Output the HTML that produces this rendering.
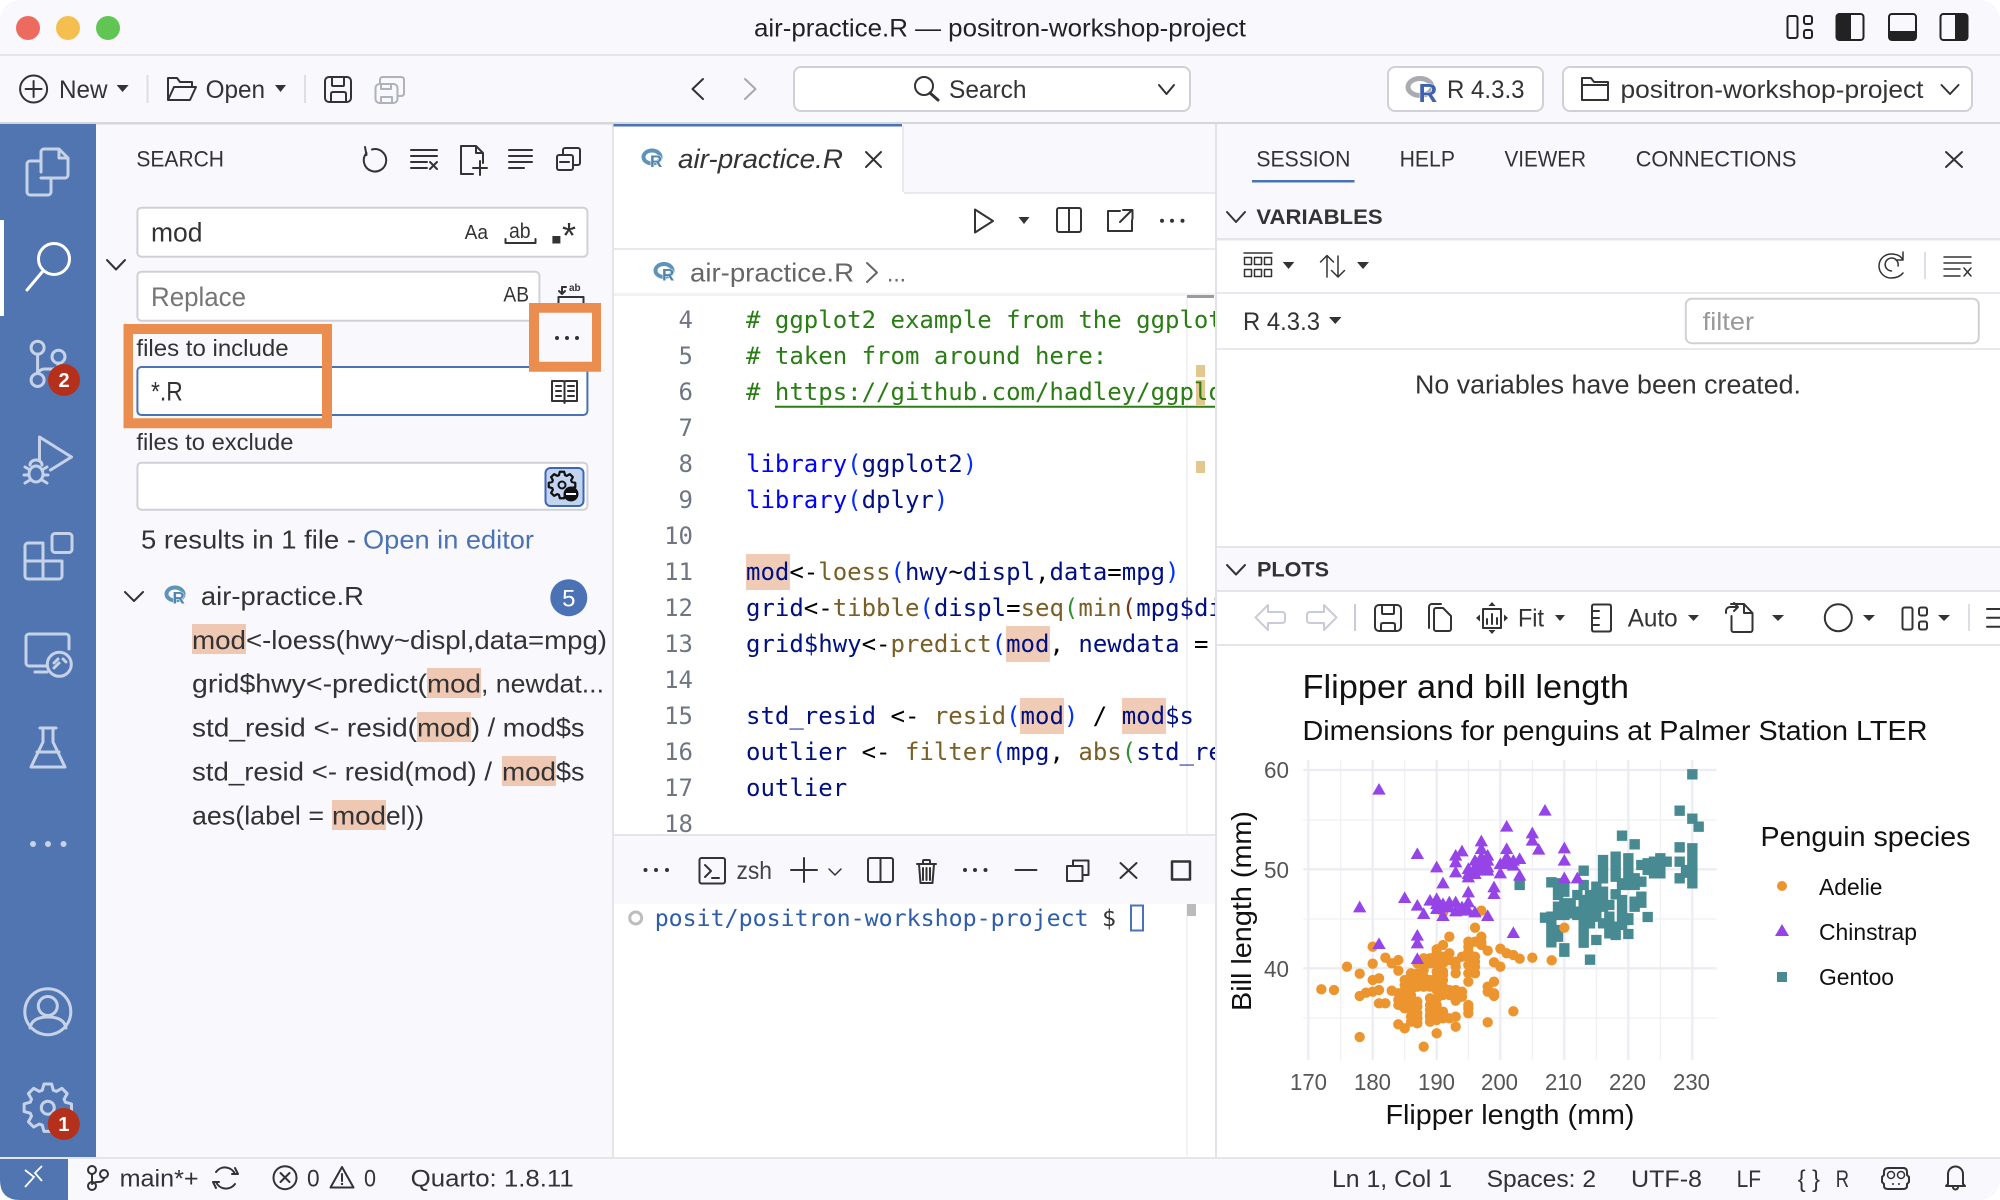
<!DOCTYPE html>
<html lang="en">
<head>
<meta charset="utf-8">
<title>air-practice.R — positron-workshop-project</title>
<style>
html,body{margin:0;padding:0;background:#fff;width:2000px;height:1200px;overflow:hidden}
svg{display:block;font-family:"Liberation Sans",sans-serif}
text{white-space:pre;fill:#333;stroke:none}
.m text,text.m{font-family:"DejaVu Sans Mono","Liberation Mono",monospace}
.k{fill:#0000ff}.v{fill:#001080}.f{fill:#795e26}.o{fill:#000}.b1{fill:#0431fa}.b2{fill:#319331}.b3{fill:#7b3814}
.ln{fill:#6f7682;text-anchor:end}
.i{fill:none;stroke:#333;stroke-width:2;stroke-linecap:round;stroke-linejoin:round}
.a{fill:none;stroke:#c6d2e8;stroke-width:3;stroke-linecap:round;stroke-linejoin:round}
.g{fill:none;stroke:#c9cbd8;stroke-width:2;stroke-linejoin:round}
</style>
</head>
<body>
<svg width="2000" height="1200" viewBox="0 0 2000 1200" xmlns="http://www.w3.org/2000/svg">
<rect width="2000" height="1200" rx="20" fill="#f8f8fd"/>

<!-- traffic lights -->
<circle cx="28" cy="28" r="12" fill="#ec6a5e"/><circle cx="68" cy="28" r="12" fill="#f4bf4f"/><circle cx="108" cy="28" r="12" fill="#61c554"/>
<text x="754" y="36.500" font-size="25" textLength="492" lengthAdjust="spacingAndGlyphs" style="fill:#222">air-practice.R — positron-workshop-project</text>
<rect y="54" width="2000" height="2" fill="#e4e4ea"/>
<!-- layout icons -->
<g class="i" style="stroke:#222">
<rect x="1787.500" y="16" width="10" height="22" rx="2"/><rect x="1804" y="16" width="8" height="8" rx="2"/><rect x="1804" y="30" width="8" height="8" rx="2"/>
<rect x="1836.500" y="14" width="27" height="26" rx="3"/><rect x="1889" y="14" width="27" height="26" rx="3"/><rect x="1940.500" y="14" width="27" height="26" rx="3"/>
</g>
<path d="M1839 14h12v26h-12a3 3 0 0 1-3-3V17a3 3 0 0 1 3-3z" fill="#222"/>
<path d="M1889 31h27v6a3 3 0 0 1-3 3h-21a3 3 0 0 1-3-3z" fill="#222"/>
<path d="M1955 14h10a3 3 0 0 1 3 3v20a3 3 0 0 1-3 3h-10z" fill="#222"/>

<!-- toolbar -->
<g class="i">
<circle cx="33.600" cy="89" r="13.500"/><path d="M33.600 81v16M25.600 89h16"/>
<path d="M168 100V78h9l3 4h12v5M168 100l6-13h22l-6 13z"/>
<rect x="325" y="77" width="26" height="25" rx="4"/><path d="M332 77v8q0 1 1 1h10q1 0 1-1v-8M331 102v-8q0-2 2-2h11q2 0 2 2v8"/>
</g>
<text x="59" y="98" font-size="25" textLength="48.500" lengthAdjust="spacingAndGlyphs">New</text>
<path d="M116.600 85h12l-6 7zM275 85h11l-5.500 7z" fill="#333"/>
<text x="205.600" y="98" font-size="25" textLength="59.500" lengthAdjust="spacingAndGlyphs">Open</text>
<path d="M147.500 75v28M305 75v28" stroke="#dedee6" stroke-width="2"/>
<g class="i" style="stroke:#b0b2ba">
<rect x="375.500" y="84" width="22" height="19" rx="4"/><path d="M381 84v5h10v-5M381 103v-6h11v6M383 77h18q3 0 3 3v13q0 3-3 3h-3M383 77q-3 0-3 3v4"/>
</g>
<g class="i"><path d="M703 79l-10.500 10L703 99"/></g>
<path d="M745 79l10.500 10L745 99" fill="none" stroke="#a8a8b0" stroke-width="2" stroke-linecap="round" stroke-linejoin="round"/>
<rect x="794" y="67" width="396" height="44" rx="7" fill="#fff" stroke="#d0d0d8" stroke-width="2"/>
<g class="i"><circle cx="924" cy="86" r="9"/><path d="M930 93l8 7" stroke-width="3"/></g>
<text x="949" y="98" font-size="25" textLength="77.500" lengthAdjust="spacingAndGlyphs">Search</text>
<path class="i" d="M1159 85l7.500 9 7.500-9"/>

<rect x="1388" y="67" width="155" height="44" rx="7" fill="#fff" stroke="#d0d0d8" stroke-width="2"/>
<ellipse cx="1420" cy="87" rx="12" ry="8.500" fill="none" stroke="#a9abb0" stroke-width="5"/>
<text x="1418.500" y="102" font-size="26" font-weight="700" style="fill:#3f62ae;stroke:#fff;stroke-width:1;paint-order:stroke">R</text>
<text x="1447" y="98" font-size="25" textLength="77.500" lengthAdjust="spacingAndGlyphs">R 4.3.3</text>
<rect x="1563" y="67" width="409" height="44" rx="7" fill="#fff" stroke="#d0d0d8" stroke-width="2"/>
<g class="i"><path d="M1582 78h9l3 4h14v18h-26zM1582 85h26"/></g>
<text x="1620.500" y="98" font-size="25" textLength="303" lengthAdjust="spacingAndGlyphs">positron-workshop-project</text>
<path class="i" d="M1941.500 85l8.500 9 8.500-9"/>
<rect y="122" width="2000" height="2.500" fill="#d6d6dd"/>

<!-- activity bar -->
<rect y="124" width="96" height="1033" fill="#5075b1"/>
<rect y="220" width="4" height="96" fill="#fff"/>
<g class="a">
<path d="M41 172V152a3 3 0 0 1 3-3h15l9 9v17a3 3 0 0 1-3 3H41M59 149v9h9M41 161H30a3 3 0 0 0-3 3v28a3 3 0 0 0 3 3h18a3 3 0 0 0 3-3V178"/>
<path d="M39.500 460V437l32 20-21 13"/>
<ellipse cx="36" cy="474" rx="7" ry="8"/><path d="M30 465a6 5 0 0 1 12 0M25 467l5 3M47 467l-5 3M24 475h5M48 475h-5M25 483l5-3M47 483l-5-3"/>
<rect x="52" y="533.500" width="20" height="19" rx="3"/><path d="M25 546a3 3 0 0 1 3-3h15v36H28a3 3 0 0 1-3-3zM25 561h37M43 561h19v15a3 3 0 0 1-3 3H43"/>
<path d="M47 666H29a3 3 0 0 1-3-3V637a3 3 0 0 1 3-3h37a3 3 0 0 1 3 3v12M35 672h12"/><circle cx="59.300" cy="664.300" r="12"/><path d="M54 668l5-5M63 659l3 3M58 659l-4 4"/>
<path d="M40 728h16M43 728v14L31 767h34L53 742v-14M37 752h22"/>
<circle cx="47.800" cy="1011.700" r="23"/><circle cx="47.800" cy="1006" r="9.500"/><path d="M30 1028q2-11 18-11t18 11"/>
<polygon transform="translate(47.800 1107.700)" points="-3.800,-23.700 3.800,-23.700 5.500,-17.500 8.500,-16.300 14.100,-19.400 19.400,-14.100 16.300,-8.500 17.500,-5.500 23.700,-3.800 23.700,3.800 17.500,5.500 16.300,8.500 19.400,14.100 14.100,19.400 8.500,16.300 5.500,17.500 3.800,23.700 -3.800,23.700 -5.500,17.500 -8.500,16.300 -14.100,19.400 -19.400,14.100 -16.300,8.500 -17.500,5.500 -23.700,3.800 -23.700,-3.800 -17.500,-5.500 -16.300,-8.500 -19.400,-14.100 -14.100,-19.400 -8.500,-16.300 -5.500,-17.500"/>
<circle cx="47.800" cy="1107.700" r="6.500"/>
<circle cx="37.600" cy="347.700" r="6.500"/><circle cx="58.500" cy="356.700" r="6.500"/><circle cx="37.600" cy="380" r="6.500"/><path d="M37.600 354v19M58.500 363q0 6-6 6h-8q-4 0-6.900 4"/>
</g>
<g fill="none" stroke="#fff" stroke-width="3" stroke-linecap="round"><circle cx="54" cy="259" r="15.500"/><path d="M43 271l-16 19"/></g>
<circle cx="33" cy="844" r="3" fill="#c6d2e8"/><circle cx="48" cy="844" r="3" fill="#c6d2e8"/><circle cx="63.500" cy="844" r="3" fill="#c6d2e8"/>
<circle cx="64" cy="380" r="16" fill="#b5301a"/><text x="64" y="387" font-size="20" font-weight="700" text-anchor="middle" style="fill:#fff">2</text>
<circle cx="63.800" cy="1124" r="16" fill="#b5301a"/><text x="63.800" y="1131" font-size="20" font-weight="700" text-anchor="middle" style="fill:#fff">1</text>

<!-- sidebar -->
<rect x="612" y="124" width="2" height="1033" fill="#e4e4ea"/>
<text x="136.400" y="166.700" font-size="22" textLength="87.600" lengthAdjust="spacingAndGlyphs">SEARCH</text>
<g class="i">
<path d="M372 149.500A11.200 11.200 0 1 1 366.500 153M365 147l1.500 8"/>
<path d="M411 150h26M411 156h26M411 162h16M411 168h16M430 162l7 7M437 162l-7 7"/>
<path d="M473 174h-12V146h15l7 7v10M476 146v7h7M480 161v14M473 168h14"/>
<path d="M509 150h23M509 156h23M509 162h23M509 168h15"/>
<path d="M563 155v-5a2 2 0 0 1 2-2h13a2 2 0 0 1 2 2v13a2 2 0 0 1-2 2h-5"/><rect x="557" y="155" width="16" height="15" rx="2"/><path d="M560 162h9"/>
</g>
<rect x="137.400" y="207.700" width="450" height="49" rx="4" fill="#fff" stroke="#d0d0d8" stroke-width="2"/>
<text x="151" y="241.700" font-size="27" textLength="51.500" lengthAdjust="spacingAndGlyphs">mod</text>
<text x="464.600" y="239" font-size="20" textLength="23.400" lengthAdjust="spacingAndGlyphs">Aa</text>
<text x="509" y="238" font-size="21" textLength="21.600" lengthAdjust="spacingAndGlyphs">ab</text>
<path class="i" d="M505.500 239v4h30v-4"/>
<rect x="552.400" y="236" width="8" height="7.500" fill="#333"/>
<text x="562" y="248" font-size="36">*</text>
<path class="i" d="M107 260l9 9.500 9-9.500"/>
<rect x="137.400" y="271.700" width="402" height="49" rx="4" fill="#fff" stroke="#d0d0d8" stroke-width="2"/>
<text x="151" y="306" font-size="27" textLength="95" lengthAdjust="spacingAndGlyphs" style="fill:#757575">Replace</text>
<text x="503.400" y="301.600" font-size="21" textLength="25.600" lengthAdjust="spacingAndGlyphs">AB</text>
<g class="i"><path d="M558.500 303v-6h25v6M566 287h-4v6M559 291l3 3 3-3"/></g>
<text x="569" y="291" font-size="10" font-weight="700">ab</text>
<text x="136.400" y="356" font-size="23" textLength="152.200" lengthAdjust="spacingAndGlyphs">files to include</text>
<rect x="137.400" y="367" width="450" height="48" rx="4" fill="#fff" stroke="#4a72b5" stroke-width="2"/>
<text x="151" y="400.700" font-size="27" textLength="31.700" lengthAdjust="spacingAndGlyphs">*.R</text>
<g class="i"><path d="M552 381h11q1.500 0 1.500 2 0-2 1.500-2h11v20h-11q-1.500 0-1.500 2 0-2-1.500-2h-11zM564.500 383v18M556 386h5M556 391h5M556 396h5M568 386h6M568 391h6M568 396h6"/></g>
<text x="136.400" y="450" font-size="23" textLength="157" lengthAdjust="spacingAndGlyphs">files to exclude</text>
<rect x="137.400" y="462.700" width="450" height="47" rx="4" fill="#fff" stroke="#d0d0d8" stroke-width="2"/>
<rect x="545.500" y="468" width="38" height="38" rx="5" fill="#c2d4f0" stroke="#3d66b8" stroke-width="2"/>
<polygon class="i" style="stroke:#111;stroke-width:4" transform="translate(562 485) scale(.56)" points="-3.800,-23.700 3.800,-23.700 5.500,-17.500 8.500,-16.300 14.100,-19.400 19.400,-14.100 16.300,-8.500 17.500,-5.500 23.700,-3.800 23.700,3.800 17.500,5.500 16.300,8.500 19.400,14.100 14.100,19.400 8.500,16.300 5.500,17.500 3.800,23.700 -3.800,23.700 -5.500,17.500 -8.500,16.300 -14.100,19.400 -19.400,14.100 -16.300,8.500 -17.500,5.500 -23.700,3.800 -23.700,-3.800 -17.500,-5.500 -16.300,-8.500 -19.400,-14.100 -14.100,-19.400 -8.500,-16.300 -5.500,-17.500"/>
<circle cx="562" cy="485" r="3.500" fill="none" stroke="#111" stroke-width="2"/>
<circle cx="571" cy="494" r="7.500" fill="#111"/><path d="M566 494h10" stroke="#fff" stroke-width="2"/>
<text x="141" y="548.300" font-size="26" textLength="215" lengthAdjust="spacingAndGlyphs">5 results in 1 file -</text>
<text x="363" y="548.300" font-size="26" textLength="171" lengthAdjust="spacingAndGlyphs" style="fill:#4a72b5">Open in editor</text>
<path class="i" d="M125 592l9 9 9-9"/>
<ellipse cx="175" cy="594" rx="8.500" ry="6.500" fill="none" stroke="#5e93ba" stroke-width="4"/>
<text x="172.500" y="603.500" font-size="17" font-weight="700" style="fill:#4f86ae;stroke:#f8f8fd;stroke-width:1;paint-order:stroke">R</text>
<text x="200.900" y="605" font-size="26" textLength="163" lengthAdjust="spacingAndGlyphs">air-practice.R</text>
<circle cx="568.800" cy="597.700" r="18.500" fill="#4a72b5"/><text x="568.800" y="606.500" font-size="24" text-anchor="middle" style="fill:#fff">5</text>
<g fill="#eec8b3">
<rect x="192" y="624" width="54" height="30"/><rect x="427" y="668" width="54" height="30"/><rect x="417" y="712" width="54" height="30"/><rect x="502" y="756" width="54" height="30"/><rect x="332" y="800" width="54" height="30"/>
</g>
<g font-size="26">
<text x="192" y="649" textLength="54" lengthAdjust="spacingAndGlyphs">mod</text><text x="246" y="649" textLength="361" lengthAdjust="spacingAndGlyphs">&lt;-loess(hwy~displ,data=mpg)</text>
<text x="192" y="692.700" textLength="235" lengthAdjust="spacingAndGlyphs">grid$hwy&lt;-predict(</text><text x="427" y="692.700" textLength="54" lengthAdjust="spacingAndGlyphs">mod</text><text x="481" y="692.700" textLength="123" lengthAdjust="spacingAndGlyphs">, newdat...</text>
<text x="192" y="736.700" textLength="225" lengthAdjust="spacingAndGlyphs">std_resid &lt;- resid(</text><text x="417" y="736.700" textLength="54" lengthAdjust="spacingAndGlyphs">mod</text><text x="471" y="736.700" textLength="113.500" lengthAdjust="spacingAndGlyphs">) / mod$s</text>
<text x="192" y="780.700" textLength="300" lengthAdjust="spacingAndGlyphs">std_resid &lt;- resid(mod) /</text><text x="502" y="780.700" textLength="54" lengthAdjust="spacingAndGlyphs">mod</text><text x="556" y="780.700" textLength="28.500" lengthAdjust="spacingAndGlyphs">$s</text>
<text x="192" y="824.700" textLength="132" lengthAdjust="spacingAndGlyphs">aes(label =</text><text x="332" y="824.700" textLength="54" lengthAdjust="spacingAndGlyphs">mod</text><text x="386" y="824.700" textLength="38" lengthAdjust="spacingAndGlyphs">el))</text>
</g>

<!-- editor -->
<rect x="614" y="124" width="601" height="1033" fill="#fff"/>
<rect x="614" y="124" width="601" height="68" fill="#f8f8fd"/>
<rect x="614" y="126" width="288" height="68" fill="#fff"/>
<rect x="613.500" y="124" width="288.500" height="2.500" fill="#4a72b5"/>
<rect x="902" y="126" width="2" height="66" fill="#e8e8ee"/>
<rect x="904" y="192" width="311" height="2" fill="#e8e8ee"/>
<ellipse cx="652" cy="157" rx="8.500" ry="6.500" fill="none" stroke="#5e93ba" stroke-width="4"/>
<text x="650" y="167" font-size="17" font-weight="700" style="fill:#4f86ae;stroke:#fff;stroke-width:1;paint-order:stroke">R</text>
<text x="678" y="168" font-size="27" font-style="italic" textLength="165" lengthAdjust="spacingAndGlyphs">air-practice.R</text>
<path class="i" d="M866 152l15 15M881 152l-15 15"/>
<g class="i">
<path d="M975 209.500v23l18-11.500z"/>
<rect x="1057" y="208" width="24" height="24" rx="2"/><path d="M1069 208v24"/>
<path d="M1120 211h-12v20h24v-11M1120 222l12-12M1123 210h9.500v9"/>
</g>
<path d="M1018.500 217h11l-5.500 7z" fill="#333"/>
<circle cx="1162" cy="220.700" r="2" fill="#333"/><circle cx="1172" cy="220.700" r="2" fill="#333"/><circle cx="1182.500" cy="220.700" r="2" fill="#333"/>
<rect x="614" y="248" width="601" height="2" fill="#e8e8ee"/>
<ellipse cx="664" cy="270.500" rx="8.500" ry="6.500" fill="none" stroke="#5e93ba" stroke-width="4"/>
<text x="662" y="280.500" font-size="17" font-weight="700" style="fill:#4f86ae;stroke:#fff;stroke-width:1;paint-order:stroke">R</text>
<text x="690" y="281.700" font-size="26" textLength="164" lengthAdjust="spacingAndGlyphs" style="fill:#666">air-practice.R</text>
<path class="i" d="M867 263l10 9.500-10 9.500" style="stroke:#666"/>
<text x="887" y="281.700" font-size="24" textLength="19" lengthAdjust="spacingAndGlyphs" style="fill:#666">...</text>
<rect x="614" y="293" width="601" height="3" fill="#f2f2f5"/>
<path d="M1187 296v860" stroke="#eeeef2" stroke-width="1.500"/>
<rect x="1187" y="295" width="27" height="3" fill="#9a9a9f"/>
<g fill="#e3c78e"><rect x="1196" y="365" width="9" height="12"/><rect x="1196" y="380" width="9" height="25"/><rect x="1196" y="461" width="9" height="12"/></g>
<g fill="#f0ccb6"><rect x="746" y="554" width="44" height="36"/><rect x="1006" y="626" width="44" height="36"/><rect x="1020" y="698" width="44" height="36"/><rect x="1122" y="698" width="44" height="36"/></g>
<g class="m" font-size="24">
<text class="ln" x="693" y="328">4</text><text class="ln" x="693" y="364">5</text><text class="ln" x="693" y="400">6</text><text class="ln" x="693" y="436">7</text><text class="ln" x="693" y="472">8</text><text class="ln" x="693" y="508">9</text><text class="ln" x="693" y="544">10</text><text class="ln" x="693" y="580">11</text><text class="ln" x="693" y="616">12</text><text class="ln" x="693" y="652">13</text><text class="ln" x="693" y="688">14</text><text class="ln" x="693" y="724">15</text><text class="ln" x="693" y="760">16</text><text class="ln" x="693" y="796">17</text><text class="ln" x="693" y="832">18</text>
<text x="746" y="328" style="fill:#2a7d14"># ggplot2 example from the ggplot2 book</text>
<text x="746" y="364" style="fill:#2a7d14"># taken from around here:</text>
<text x="746" y="400" style="fill:#2a7d14"># https://github.com/hadley/ggplot2-book</text>
<text x="746" y="472"><tspan class="k">library</tspan><tspan class="b1">(</tspan><tspan class="v">ggplot2</tspan><tspan class="b1">)</tspan></text>
<text x="746" y="508"><tspan class="k">library</tspan><tspan class="b1">(</tspan><tspan class="v">dplyr</tspan><tspan class="b1">)</tspan></text>
<text x="746" y="580"><tspan class="v">mod</tspan><tspan class="o">&lt;-</tspan><tspan class="f">loess</tspan><tspan class="b1">(</tspan><tspan class="v">hwy</tspan><tspan class="o">~</tspan><tspan class="v">displ</tspan><tspan class="o">,</tspan><tspan class="v">data</tspan><tspan class="o">=</tspan><tspan class="v">mpg</tspan><tspan class="b1">)</tspan></text>
<text x="746" y="616"><tspan class="v">grid</tspan><tspan class="o">&lt;-</tspan><tspan class="f">tibble</tspan><tspan class="b1">(</tspan><tspan class="v">displ</tspan><tspan class="o">=</tspan><tspan class="f">seq</tspan><tspan class="b2">(</tspan><tspan class="f">min</tspan><tspan class="b3">(</tspan><tspan class="v">mpg$displ</tspan></text>
<text x="746" y="652"><tspan class="v">grid$hwy</tspan><tspan class="o">&lt;-</tspan><tspan class="f">predict</tspan><tspan class="b1">(</tspan><tspan class="v">mod</tspan><tspan class="o">, </tspan><tspan class="v">newdata</tspan><tspan class="o"> = </tspan><tspan class="v">grid</tspan></text>
<text x="746" y="724"><tspan class="v">std_resid</tspan><tspan class="o"> &lt;- </tspan><tspan class="f">resid</tspan><tspan class="b1">(</tspan><tspan class="v">mod</tspan><tspan class="b1">)</tspan><tspan class="o"> / </tspan><tspan class="v">mod$s</tspan></text>
<text x="746" y="760"><tspan class="v">outlier</tspan><tspan class="o"> &lt;- </tspan><tspan class="f">filter</tspan><tspan class="b1">(</tspan><tspan class="v">mpg</tspan><tspan class="o">, </tspan><tspan class="f">abs</tspan><tspan class="b2">(</tspan><tspan class="v">std_resid</tspan></text>
<text x="746" y="796"><tspan class="v">outlier</tspan></text>
</g>
<path d="M775 406.700h440" stroke="#2a7d14" stroke-width="2"/>

<!-- terminal -->
<rect x="614" y="835" width="601" height="69" fill="#f8f8fd"/>
<rect x="614" y="834" width="601" height="2" fill="#e4e4ea"/>
<g fill="#333"><circle cx="645.500" cy="870" r="2"/><circle cx="656" cy="870" r="2"/><circle cx="667" cy="870" r="2"/><circle cx="965" cy="870" r="2"/><circle cx="975" cy="870" r="2"/><circle cx="985.500" cy="870" r="2"/></g>
<g class="i">
<rect x="699.500" y="858" width="25.500" height="25.500" rx="2"/><path d="M705 865l6 6-6 6M712 878h7"/>
<path d="M791 870h26M804 858v24"/><path d="M829 869l6 6 6-6" stroke-width="1.500"/>
<rect x="868" y="858" width="25" height="24" rx="2"/><path d="M880.500 858v24"/>
<path d="M917 864h19M923 864v-3a1 1 0 0 1 1-1h5a1 1 0 0 1 1 1v3M919 864l1.500 19h12l1.500-19M923 868v12M926.500 868v12M930 868v12"/>
<path d="M1015.500 870h21"/>
<rect x="1067" y="866" width="15.500" height="15"/><path d="M1073 866v-5.500h15.500V875h-6"/>
<path d="M1120.500 863l16 15M1136.500 863l-16 15"/>
<rect x="1172" y="861.500" width="18" height="18" stroke-width="2.500"/>
</g>
<text x="736.500" y="879" font-size="25" textLength="35.500" lengthAdjust="spacingAndGlyphs" style="fill:#444">zsh</text>
<circle cx="635.700" cy="918" r="6" fill="none" stroke="#bdbdc0" stroke-width="3"/>
<text class="m" x="654.700" y="926" font-size="23.250" style="fill:#2f5da8">posit/positron-workshop-project</text>
<text class="m" x="1102" y="926" font-size="23.250">$</text>
<rect x="1131" y="905.500" width="12" height="25" fill="none" stroke="#4a72b5" stroke-width="2"/>
<rect x="1187" y="904" width="9" height="12" fill="#bbb"/>

<!-- right panel -->
<rect x="1215" y="124" width="785" height="1033" fill="#f8f8fd"/>
<rect x="1215" y="124" width="2" height="1033" fill="#e2e2e9"/>
<g font-size="22">
<text x="1256.400" y="166.700" textLength="94" lengthAdjust="spacingAndGlyphs">SESSION</text>
<text x="1399.600" y="166.700" textLength="55.400" lengthAdjust="spacingAndGlyphs">HELP</text>
<text x="1504.500" y="166.700" textLength="81.500" lengthAdjust="spacingAndGlyphs">VIEWER</text>
<text x="1635.700" y="166.700" textLength="160.700" lengthAdjust="spacingAndGlyphs">CONNECTIONS</text>
</g>
<rect x="1252" y="180" width="102.500" height="2.500" fill="#4a72b5"/>
<path class="i" d="M1946 152l16 15M1962 152l-16 15"/>
<path class="i" d="M1227 212l9 10 9-10"/>
<text x="1256.400" y="224" font-size="21.500" font-weight="700" textLength="126.200" lengthAdjust="spacingAndGlyphs">VARIABLES</text>
<rect x="1217" y="240" width="783" height="306" fill="#fff"/>
<rect x="1217" y="238" width="783" height="2.500" fill="#e4e4ea"/>
<rect x="1217" y="292" width="783" height="2" fill="#e8e8ee"/>
<g class="i" stroke-width="1.500" style="stroke-width:1.500">
<path d="M1244 253h28"/><rect x="1244.500" y="257.500" width="7" height="7"/><rect x="1254.500" y="257.500" width="7" height="7"/><rect x="1264.500" y="257.500" width="7" height="7"/><rect x="1244.500" y="269.500" width="7" height="7"/><rect x="1254.500" y="269.500" width="7" height="7"/><rect x="1264.500" y="269.500" width="7" height="7"/>
<path d="M1327 277v-21M1320.500 262l6.500-6.500 6.500 6.500M1338 256v21M1331.500 270.500l6.500 6.500 6.500-6.500"/>
<path d="M1903 260q-3-6-12-6a12 12 0 0 0 0 24q8 0 12-5M1903 252v8h-7M1898 266a6.500 6.500 0 1 0-6.500 5"/>
<path d="M1944 257h27M1944 263h27M1944 269h16M1944 276h16M1964 268l7 8M1971 268l-7 8"/>
</g>
<path d="M1282.800 262h11.500l-5.750 7zM1357 262h12l-6 7z" fill="#333"/>
<path d="M1925 252v27" stroke="#dedee6" stroke-width="2"/>
<text x="1243" y="330" font-size="25" textLength="77" lengthAdjust="spacingAndGlyphs">R 4.3.3</text>
<path d="M1329 317h12.500l-6.250 7z" fill="#333"/>
<rect x="1685.800" y="298.700" width="293" height="44.500" rx="6" fill="#fff" stroke="#d0d0d8" stroke-width="2"/>
<text x="1702.700" y="330" font-size="25" textLength="51.300" lengthAdjust="spacingAndGlyphs" style="fill:#999">filter</text>
<rect x="1217" y="348" width="783" height="2" fill="#e8e8ee"/>
<text x="1415" y="393.300" font-size="25.500" textLength="386" lengthAdjust="spacingAndGlyphs">No variables have been created.</text>
<rect x="1217" y="546" width="783" height="46" fill="#f8f8fd"/>
<rect x="1217" y="546" width="783" height="2" fill="#e4e4ea"/>
<rect x="1217" y="590" width="783" height="2" fill="#e4e4ea"/>
<path class="i" d="M1227 565l9 9.500 9-9.500"/>
<text x="1257" y="576.700" font-size="21.500" font-weight="700" textLength="72" lengthAdjust="spacingAndGlyphs">PLOTS</text>
<rect x="1217" y="592" width="783" height="52" fill="#fff"/>
<rect x="1217" y="644" width="783" height="2" fill="#e4e4ea"/>
<rect x="1217" y="646" width="783" height="511" fill="#fff"/>
<g class="g">
<path d="M1268 605l-12.500 12.500L1268 630v-7h14q3 0 3-3v-5q0-3-3-3h-14z"/>
<path d="M1324 605l12.500 12.500L1324 630v-7h-14q-3 0-3-3v-5q0-3 3-3h14z"/>
<path d="M1355 604v27"/>
</g>
<g class="i">
<rect x="1375" y="605" width="26" height="26" rx="4"/><path d="M1382 605v8q0 1 1 1h10q1 0 1-1v-8M1381 631v-6q0-2 2-2h10q2 0 2 2v6"/>
<path d="M1429 628v-21a3 3 0 0 1 3-3h9"/><path d="M1434 610a2 2 0 0 1 2-2h7l8 8v13a2 2 0 0 1-2 2h-13a2 2 0 0 1-2-2z"/>
<rect x="1483" y="609" width="18" height="19"/><path d="M1487 624v-5M1492 624v-10M1497 624v-6"/>
<path d="M1594 604.500h15q2 0 2 2v23q0 2-2 2h-15q-2 0-2-2v-23q0-2 2-2zM1593 611h6M1593 618h6M1593 625h6"/>
<path d="M1731 604h13l8.500 9v17a2 2 0 0 1-2 2h-17a2 2 0 0 1-2-2v-14M1744 604v9h8.500M1738 607h-8a4 4 0 0 0-4 4v2M1734 603l4 4-4 4"/>
<circle cx="1838.300" cy="617.700" r="13.500"/>
<rect x="1902.500" y="607.500" width="10" height="22" rx="2"/><rect x="1919" y="607.500" width="8" height="8" rx="2"/><rect x="1919" y="621.500" width="8" height="8" rx="2"/>
<path d="M1987 609h13M1987 617.700h13M1987 626.700h13"/>
</g>
<path d="M1492 602l-3.500 4h7zM1492 634l-3.500-4h7zM1476 618l4-3.500v7zM1508 618l-4-3.500v7z" fill="#333"/>
<text x="1518" y="626.700" font-size="25" textLength="26" lengthAdjust="spacingAndGlyphs">Fit</text>
<text x="1627.700" y="626.700" font-size="25" textLength="50" lengthAdjust="spacingAndGlyphs">Auto</text>
<path d="M1555 615h10l-5 6zM1688 615h11l-5.500 6zM1772 615h12l-6 6zM1863 615h12l-6 6zM1938 615h12l-6 6z" fill="#333"/>
<path d="M1969 604v27" stroke="#dedee6" stroke-width="2"/>

<!-- plot -->
<text x="1302.500" y="698" font-size="33" textLength="326.500" lengthAdjust="spacingAndGlyphs" style="fill:#111">Flipper and bill length</text>
<text x="1302.500" y="740" font-size="28" textLength="625" lengthAdjust="spacingAndGlyphs" style="fill:#111">Dimensions for penguins at Palmer Station LTER</text>
<g font-size="23">
<text x="1264" y="778" textLength="25" lengthAdjust="spacingAndGlyphs" style="fill:#555">60</text><text x="1264" y="878" textLength="25" lengthAdjust="spacingAndGlyphs" style="fill:#555">50</text><text x="1264" y="977" textLength="25" lengthAdjust="spacingAndGlyphs" style="fill:#555">40</text>
<text x="1290" y="1090" textLength="37" lengthAdjust="spacingAndGlyphs" style="fill:#555">170</text><text x="1354" y="1090" textLength="37" lengthAdjust="spacingAndGlyphs" style="fill:#555">180</text><text x="1418" y="1090" textLength="37" lengthAdjust="spacingAndGlyphs" style="fill:#555">190</text><text x="1481" y="1090" textLength="37" lengthAdjust="spacingAndGlyphs" style="fill:#555">200</text><text x="1545" y="1090" textLength="37" lengthAdjust="spacingAndGlyphs" style="fill:#555">210</text><text x="1609" y="1090" textLength="37" lengthAdjust="spacingAndGlyphs" style="fill:#555">220</text><text x="1673" y="1090" textLength="37" lengthAdjust="spacingAndGlyphs" style="fill:#555">230</text>
</g>
<text x="1385.500" y="1124" font-size="28" textLength="249" lengthAdjust="spacingAndGlyphs" style="fill:#111">Flipper length (mm)</text>
<text transform="translate(1251 1011) rotate(-90)" x="0" y="0" font-size="28" textLength="200" lengthAdjust="spacingAndGlyphs" style="fill:#111">Bill length (mm)</text>
<text x="1760.500" y="846" font-size="28" textLength="210" lengthAdjust="spacingAndGlyphs" style="fill:#111">Penguin species</text>
<text x="1819" y="895" font-size="23" textLength="63.500" lengthAdjust="spacingAndGlyphs" style="fill:#111">Adelie</text>
<text x="1819" y="940" font-size="23" textLength="98" lengthAdjust="spacingAndGlyphs" style="fill:#111">Chinstrap</text>
<text x="1819" y="985" font-size="23" textLength="75" lengthAdjust="spacingAndGlyphs" style="fill:#111">Gentoo</text>
<circle cx="1782" cy="886" r="5" fill="#ec952e"/>
<path d="M1782 924l7 12h-14z" fill="#9643e8"/>
<rect x="1777" y="972" width="10" height="10" fill="#488a92"/>

<g transform="translate(1300 760) scale(.33333)">
<path d="M122 0v900M314 0v900M505 0v900M697 0v900M889 0v900M1081 0v900M10 180h1240M10 477h1240M10 774h1240" stroke="#f1f1f5" stroke-width="4" fill="none"/>
<path d="M25 0v900M218 0v900M410 0v900M601 0v900M793 0v900M985 0v900M1177 0v900M10 30h1240M10 328h1240M10 625h1240" stroke="#ececf2" stroke-width="7" fill="none"/>
<path fill="none" stroke="#488a92" stroke-width="31" stroke-linecap="square" d="M1177 43h.1M1139 152h.1M1177 176h.1M1196 200h.1M966 227h.1M1004 253h.1M1139 262h.1M1177 265h.1M1177 283h.1M947 290h.1M985 295h.1M1081 295h.1M1100 305h.1M1139 305h.1M1043 310h.1M1024 315h.1M1062 322h.1M1081 340h.1M1062 340h.1M909 315h.1M851 332h.1M909 335h.1M947 325h.1M985 325h.1M1177 330h.1M1158 338h.1M1139 355h.1M1177 370h.1M909 355h.1M947 350h.1M985 355h.1M1004 355h.1M1024 365h.1M985 375h.1M966 375h.1M851 375h.1M754 367h.1M659 375h.1M793 380h.1M774 385h.1M774 405h.1M832 405h.1M889 395h.1M909 395h.1M947 403h.1M1024 410h.1M966 428h.1M889 415h.1M870 425h.1M851 435h.1M928 435h.1M1024 428h.1M1004 440h.1M966 450h.1M985 475h.1M889 450h.1M870 465h.1M793 430h.1M774 440h.1M812 445h.1M774 465h.1M793 465h.1M832 465h.1M754 470h.1M735 473h.1M851 480h.1M870 490h.1M909 490h.1M928 490h.1M966 495h.1M985 480h.1M1043 471h.1M851 522h.1M928 520h.1M947 525h.1M985 522h.1M754 507h.1M754 525h.1M774 530h.1M754 547h.1M851 548h.1M889 540h.1M793 565h.1M793 575h.1M870 599h.1M889 380h.1M812 460h.1M870 445h.1M889 430h.1M909 420h.1M870 405h.1M889 405h.1M851 450h.1M909 440h.1M889 465h.1M870 455h.1M851 420h.1M889 470h.1M985 345h.1M966 370h.1M1004 375h.1M1062 305h.1M1081 315h.1M1043 330h.1M909 300h.1M947 310h.1M985 310h.1M966 420h.1M966 470h.1M1004 425h.1M832 455h.1M812 430h.1M793 445h.1M793 450h.1M754 490h.1M774 510h.1M851 505h.1M851 535h.1M754 530h.1M928 470h.1M947 500h.1M928 505h.1M1177 300h.1M1158 330h.1M1081 325h.1M1177 355h.1M774 370h.1M793 395h.1"/>
<path fill="none" stroke="#ec952e" stroke-width="31" stroke-linecap="round" d="M64 688h.1M102 690h.1M141 620h.1M179 641h.1M179 708h.1M179 831h.1M218 560h.1M218 611h.1M218 660h.1M237 655h.1M237 690h.1M237 730h.1M198 698h.1M218 695h.1M256 593h.1M256 730h.1M275 610h.1M275 692h.1M295 600h.1M295 632h.1M295 793h.1M314 660h.1M314 690h.1M314 720h.1M314 745h.1M314 805h.1M333 640h.1M333 660h.1M333 690h.1M333 720h.1M333 750h.1M333 770h.1M352 610h.1M352 680h.1M352 725h.1M352 760h.1M352 790h.1M371 595h.1M371 630h.1M371 665h.1M371 860h.1M390 595h.1M390 660h.1M390 715h.1M390 750h.1M390 785h.1M410 568h.1M410 600h.1M410 635h.1M410 665h.1M410 690h.1M410 735h.1M410 760h.1M410 780h.1M410 820h.1M429 555h.1M429 590h.1M429 635h.1M429 660h.1M429 705h.1M429 755h.1M448 530h.1M448 580h.1M448 600h.1M448 775h.1M467 620h.1M467 640h.1M467 690h.1M467 722h.1M467 770h.1M467 800h.1M486 590h.1M486 695h.1M505 545h.1M505 590h.1M505 615h.1M505 640h.1M505 665h.1M505 735h.1M505 745h.1M505 760h.1M525 503h.1M525 545h.1M525 590h.1M525 620h.1M525 640h.1M544 530h.1M544 555h.1M563 572h.1M563 680h.1M563 695h.1M563 787h.1M582 607h.1M582 665h.1M582 700h.1M582 708h.1M601 566h.1M601 620h.1M620 580h.1M640 585h.1M640 754h.1M659 596h.1M697 593h.1M755 601h.1M793 503h.1M544 452h.1M429 458h.1M486 445h.1M314 705h.1M333 705h.1M352 740h.1M333 735h.1M295 720h.1M295 700h.1M295 735h.1M390 735h.1M390 770h.1M410 715h.1M429 680h.1M429 610h.1M410 580h.1M410 650h.1M429 645h.1M410 615h.1M390 680h.1M371 680h.1M352 660h.1M371 650h.1M448 705h.1M467 705h.1M448 690h.1M505 575h.1M525 605h.1M505 560h.1M544 545h.1M467 605h.1M486 710h.1M390 610h.1M371 610h.1M352 640h.1M333 675h.1M333 785h.1M352 775h.1M390 765h.1M410 750h.1M429 775h.1M314 675h.1M314 730h.1"/>
<path fill="#9643e8" d="M237 69l20 35h-40zM179 422l20 35h-40zM237 532l20 35h-40zM352 262l20 35h-40zM314 394l20 35h-40zM352 417l20 35h-40zM371 442l20 35h-40zM352 507l20 35h-40zM352 530l20 35h-40zM352 577l20 35h-40zM410 302l20 35h-40zM390 402l20 35h-40zM410 412l20 35h-40zM410 427l20 35h-40zM429 350l20 35h-40zM429 412l20 35h-40zM429 448l20 35h-40zM448 407l20 35h-40zM467 267l20 35h-40zM467 287l20 35h-40zM467 317l20 35h-40zM467 407l20 35h-40zM467 434l20 35h-40zM486 254l20 35h-40zM486 432l20 35h-40zM505 322l20 35h-40zM505 332l20 35h-40zM505 377l20 35h-40zM505 407l20 35h-40zM505 432l20 35h-40zM525 282l20 35h-40zM525 302l20 35h-40zM525 437l20 35h-40zM544 224l20 35h-40zM544 247l20 35h-40zM544 272l20 35h-40zM544 302l20 35h-40zM563 267l20 35h-40zM563 302l20 35h-40zM563 312l20 35h-40zM563 448l20 35h-40zM582 362l20 35h-40zM582 382l20 35h-40zM601 292l20 35h-40zM601 320l20 35h-40zM620 180l20 35h-40zM620 247l20 35h-40zM620 272l20 35h-40zM620 292l20 35h-40zM640 297l20 35h-40zM640 499l20 35h-40zM659 277l20 35h-40zM659 327l20 35h-40zM697 200l20 35h-40zM697 222l20 35h-40zM716 249l20 35h-40zM735 132l20 35h-40zM793 245l20 35h-40zM793 282l20 35h-40zM793 335l20 35h-40zM832 335l20 35h-40zM525 322l20 35h-40zM544 292l20 35h-40zM544 312l20 35h-40zM563 282l20 35h-40zM505 307l20 35h-40zM620 282l20 35h-40zM640 282l20 35h-40zM486 422l20 35h-40zM448 422l20 35h-40zM429 422l20 35h-40zM410 397l20 35h-40z"/>
</g>

<!-- orange annotation boxes -->
<path fill-rule="evenodd" fill="#ea8d4f" d="M123.500 324H332V428.300H123.500zM133 334V418.300H322V334z"/>
<rect x="539" y="312.700" width="53" height="49" fill="#f8f8fd"/>
<path fill-rule="evenodd" fill="#ea8d4f" d="M529 303H601V371.700H529zM539 312.700V361.700H592V312.700z"/>
<circle cx="557" cy="338" r="2" fill="#333"/><circle cx="567" cy="338" r="2" fill="#333"/><circle cx="577" cy="338" r="2" fill="#333"/>

<!-- status bar -->
<rect y="1157" width="2000" height="2" fill="#e4e4ea"/>
<path d="M0 1159H68V1200H20Q0 1200 0 1180z" fill="#5075b1"/>
<path d="M25 1187l9-10-9-7M42 1166l-7 7 7 8" fill="none" stroke="#fff" stroke-width="1.800"/>
<g class="i">
<circle cx="92" cy="1170" r="4"/><circle cx="92" cy="1186" r="4"/><circle cx="104" cy="1174" r="4"/><path d="M92 1174v8M104 1178q0 4-6 4-4 0-6 2"/>
<path d="M216 1172a11 11 0 0 1 19 2M235 1184a11 11 0 0 1-19-2M232 1174h6l-3-6M219 1182h-6l3 6"/>
<circle cx="285" cy="1177.700" r="11.500"/><path d="M280.500 1173l9 9M289.500 1173l-9 9"/>
<path d="M342 1167l11.500 20.500h-23zM342 1174v7"/>
</g>
<circle cx="342" cy="1184" r="1.200" fill="#333"/>
<g font-size="24">
<text x="119.600" y="1186.700" textLength="79" lengthAdjust="spacingAndGlyphs">main*+</text>
<text x="307" y="1186.700" textLength="12.600" lengthAdjust="spacingAndGlyphs">0</text>
<text x="364" y="1186.700" textLength="12" lengthAdjust="spacingAndGlyphs">0</text>
<text x="410.700" y="1186.700" textLength="163" lengthAdjust="spacingAndGlyphs">Quarto: 1.8.11</text>
<text x="1332" y="1187" textLength="120" lengthAdjust="spacingAndGlyphs">Ln 1, Col 1</text>
<text x="1486.600" y="1187" textLength="109.400" lengthAdjust="spacingAndGlyphs">Spaces: 2</text>
<text x="1631" y="1187" textLength="71" lengthAdjust="spacingAndGlyphs">UTF-8</text>
<text x="1736.600" y="1187" textLength="24.400" lengthAdjust="spacingAndGlyphs">LF</text>
<text x="1797.800" y="1187" textLength="22.200" lengthAdjust="spacingAndGlyphs">{ }</text>
<text x="1835.700" y="1187" textLength="13.300" lengthAdjust="spacingAndGlyphs">R</text>
</g>
<g class="i">
<path d="M1888 1168h15q4 0 4 4v3l2 2v5l-2 2v2q0 3-4 3h-15q-4 0-4-3v-2l-2-2v-5l2-2v-3q0-4 4-4z"/><circle cx="1891" cy="1175" r="3.500" style="stroke-width:1.500"/><circle cx="1901" cy="1175" r="3.500" style="stroke-width:1.500"/>
<path d="M1948 1184v-10a7.500 7.500 0 0 1 15 0v10l2 2h-19zM1953 1187a2.500 2.500 0 0 0 5 0"/>
</g>
<circle cx="1893" cy="1184" r="1" fill="#333"/><circle cx="1899" cy="1184" r="1" fill="#333"/>
</svg>
</body>
</html>
